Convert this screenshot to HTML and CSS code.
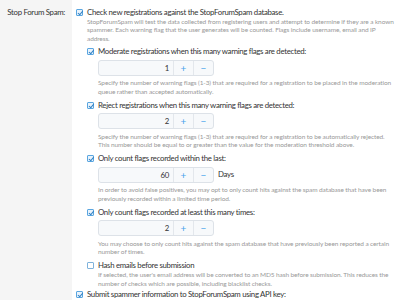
FILE: index.html
```html
<!DOCTYPE html>
<html lang="en">
<head>
  <meta charset="UTF-8" />
  <title>Options - Stop Forum Spam</title>
  <link rel="stylesheet" href="styles.css">
</head>
<body>
  <dl class="form-row">
    <dt class="row-label">Stop Forum Spam:</dt>
    <dd class="row-input">
      <ul class="choices">
        <li class="choice">
          <span class="box checked"></span>
          <span class="choice-text">Check new registrations against the StopForumSpam database.</span>
          <p class="hint">StopForumSpam will test the data collected from registering users and attempt to determine if they are a known spammer. Each warning flag that the user generates will be counted. Flags include username, email and IP address.</p>
          <ul class="choices nested">
            <li class="choice">
              <span class="box checked"></span>
              <span class="choice-text">Moderate registrations when this many warning flags are detected:</span>
              <div class="spin-row">
                <div class="spinner"><span class="spin-value">1</span><span class="spin-btn">+</span><span class="spin-btn">&minus;</span></div>
              </div>
              <p class="hint">Specify the number of warning flags (1-3) that are required for a registration to be placed in the moderation queue rather than accepted automatically.</p>
            </li>
            <li class="choice">
              <span class="box checked"></span>
              <span class="choice-text">Reject registrations when this many warning flags are detected:</span>
              <div class="spin-row">
                <div class="spinner"><span class="spin-value">2</span><span class="spin-btn">+</span><span class="spin-btn">&minus;</span></div>
              </div>
              <p class="hint">Specify the number of warning flags (1-3) that are required for a registration to be automatically rejected. This number should be equal to or greater than the value for the moderation threshold above.</p>
            </li>
            <li class="choice">
              <span class="box checked"></span>
              <span class="choice-text">Only count flags recorded within the last:</span>
              <div class="spin-row">
                <div class="spinner"><span class="spin-value">60</span><span class="spin-btn">+</span><span class="spin-btn">&minus;</span></div>
                <span class="units">Days</span>
              </div>
              <p class="hint">In order to avoid false positives, you may opt to only count hits against the spam database that have been previously recorded within a limited time period.</p>
            </li>
            <li class="choice">
              <span class="box checked"></span>
              <span class="choice-text">Only count flags recorded at least this many times:</span>
              <div class="spin-row">
                <div class="spinner"><span class="spin-value">2</span><span class="spin-btn">+</span><span class="spin-btn">&minus;</span></div>
              </div>
              <p class="hint">You may choose to only count hits against the spam database that have previously been reported a certain number of times.</p>
            </li>
            <li class="choice">
              <span class="box"></span>
              <span class="choice-text">Hash emails before submission</span>
              <p class="hint">If selected, the user's email address will be converted to an MD5 hash before submission. This reduces the number of checks which are possible, including blacklist checks.</p>
            </li>
          </ul>
        </li>
        <li class="choice top-next">
          <span class="box checked"></span>
          <span class="choice-text">Submit spammer information to StopForumSpam using API key:</span>
        </li>
      </ul>
    </dd>
  </dl>
</body>
</html>
```

FILE: styles.css
```css
* {
  box-sizing: border-box;
  margin: 0;
  padding: 0;
}
body {
  background: #fff;
  color: #333;
  font-family: Lato, "Segoe UI", sans-serif;
  font-size: 7.8px;
  letter-spacing: -0.3px;
  line-height: 11px;
}
.form-row {
  display: grid;
  grid-template-columns: 72px 1fr;
  min-height: 300px;
}
.row-label {
  background: #f5f5f5;
  text-align: right;
  padding: 6.5px 7px 0 0;
}
.row-input {
  padding: 6.5px 3px 0 4px;
}
.choices {
  list-style: none;
}
.choice {
  display: grid;
  grid-template-columns: 11px 1fr;
}
.choice > * {
  grid-column: 2;
}
.choice + .choice {
  margin-top: 3.5px;
}
.choice.top-next {
  margin-top: 1px;
}
.nested {
  margin-top: 3px;
}
.box {
  grid-column: 1;
  grid-row: 1;
  align-self: center;
  width: 7px;
  height: 7px;
  border: 1px solid #7fb3dc;
  border-radius: 1px;
  background: #fff;
}
.box.checked {
  border-color: #5aa6e0;
  background: #e9f3fc;
  position: relative;
}
.box.checked::after {
  content: "";
  position: absolute;
  left: 1.5px;
  top: 0;
  width: 2px;
  height: 3.5px;
  border: solid #2f80c4;
  border-width: 0 1px 1px 0;
  transform: rotate(40deg);
}
.hint {
  color: #999;
  font-size: 6.5px;
  letter-spacing: -0.1px;
  line-height: 8.5px;
}
.spin-row {
  display: flex;
  align-items: center;
  gap: 4px;
  margin-top: 2.5px;
}
.spin-row + .hint {
  margin-top: 3.5px;
}
.spinner {
  display: flex;
  width: 116px;
  height: 16px;
  border: 1px solid #dde2e8;
  border-radius: 3px;
  background: #f7f9fb;
}
.spin-value {
  flex: 1;
  text-align: right;
  padding-right: 4px;
  line-height: 14px;
}
.spin-btn {
  width: 20px;
  border-left: 1px solid #e3e7ec;
  text-align: center;
  color: #47a3eb;
  font-size: 10px;
  letter-spacing: 0;
  line-height: 14px;
}
.units {
  line-height: 11px;
}
```
